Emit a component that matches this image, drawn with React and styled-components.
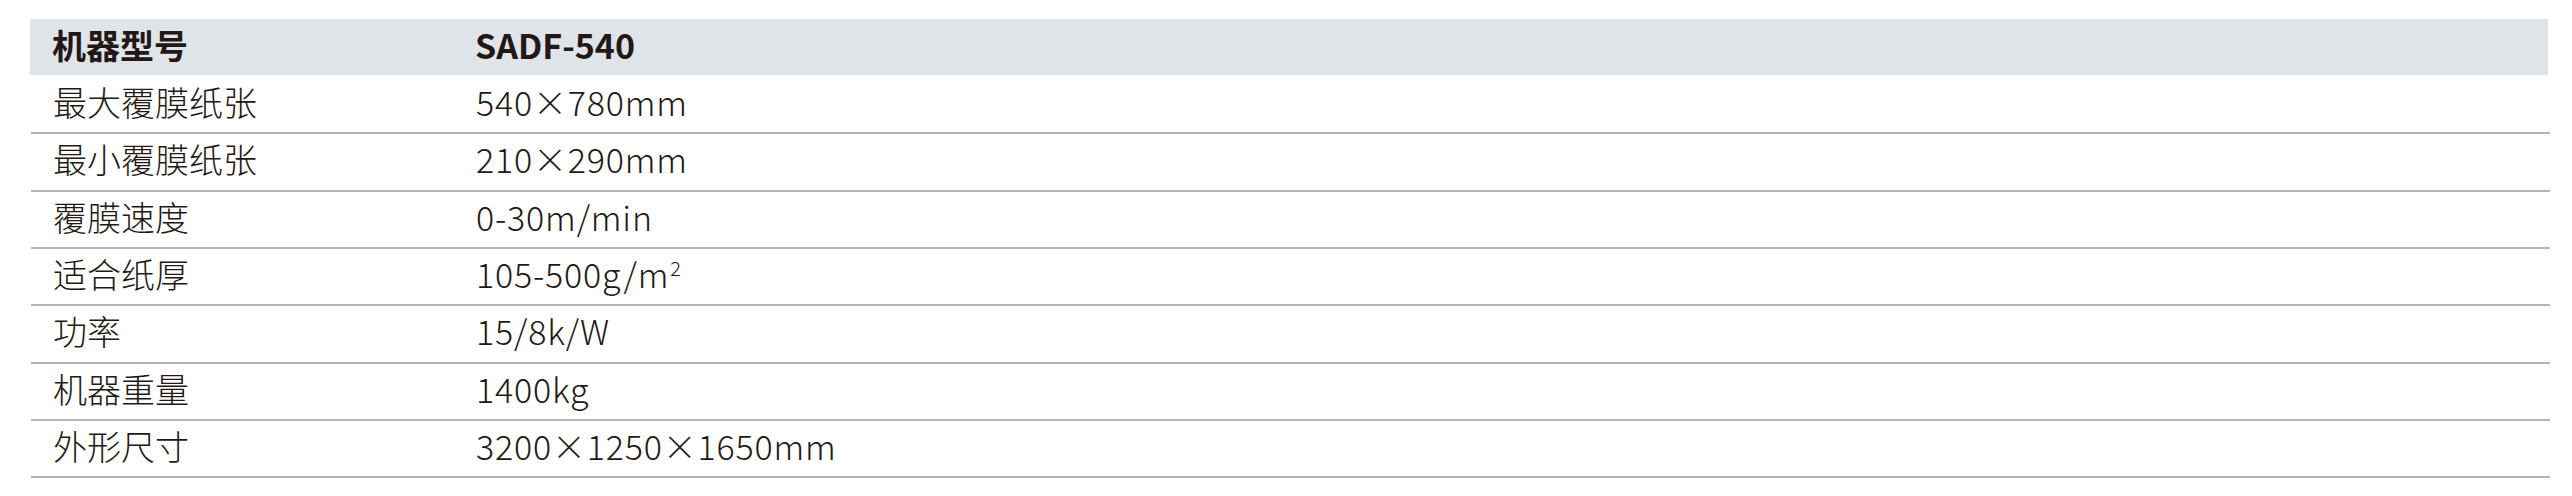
import React from "react";
import styled, { createGlobalStyle } from "styled-components";

const GlobalStyle = createGlobalStyle`
  html, body {
    margin: 0;
    padding: 0;
    background: #ffffff;
  }
  body {
    font-family: "Noto Sans CJK SC", "Noto Sans", sans-serif;
    color: #231815;
  }
`;

const Page = styled.div`
  padding: 19px 22px 0 30px;
`;

const SpecTable = styled.div`
  display: flex;
  flex-direction: column;
  width: 100%;
`;

const HeaderRow = styled.div`
  display: grid;
  grid-template-columns: 423px 1fr;
  align-items: center;
  height: 58px;
  box-sizing: border-box;
  background: #dfe4e8;
  background-clip: content-box;
  padding-bottom: 2px;
  font-weight: 700;
  margin-right: 2px;
`;

const Row = styled.div`
  display: grid;
  grid-template-columns: 423px 1fr;
  align-items: center;
  height: 57.33px;
  box-sizing: border-box;
  border-bottom: 2px solid #b5b5b5;
  margin-left: 1px;
  font-weight: 300;
`;

const Cell = styled.div`
  padding: 0 0 5px 22px;
  font-size: 34px;
  line-height: 40px;
  white-space: nowrap;
  color: #231815;
  letter-spacing: ${(p) => (p.$value ? "0.8px" : "0")};
`;

const Sup = styled.sup`
  font-size: 20px;
  line-height: 0;
  vertical-align: 12px;
  margin-left: 1px;
`;

const specs = [
  ["最大覆膜纸张", "540×780mm"],
  ["最小覆膜纸张", "210×290mm"],
  ["覆膜速度", "0-30m/min"],
  ["适合纸厚", <>105-500g/m<Sup>2</Sup></>],
  ["功率", "15/8k/W"],
  ["机器重量", "1400kg"],
  ["外形尺寸", "3200×1250×1650mm"],
];

export default function App() {
  return (
    <>
      <GlobalStyle />
      <Page>
        <SpecTable>
          <HeaderRow>
            <Cell>机器型号</Cell>
            <Cell>SADF-540</Cell>
          </HeaderRow>
          {specs.map(([label, value], i) => (
            <Row key={i}>
              <Cell>{label}</Cell>
              <Cell $value>{value}</Cell>
            </Row>
          ))}
        </SpecTable>
      </Page>
    </>
  );
}
